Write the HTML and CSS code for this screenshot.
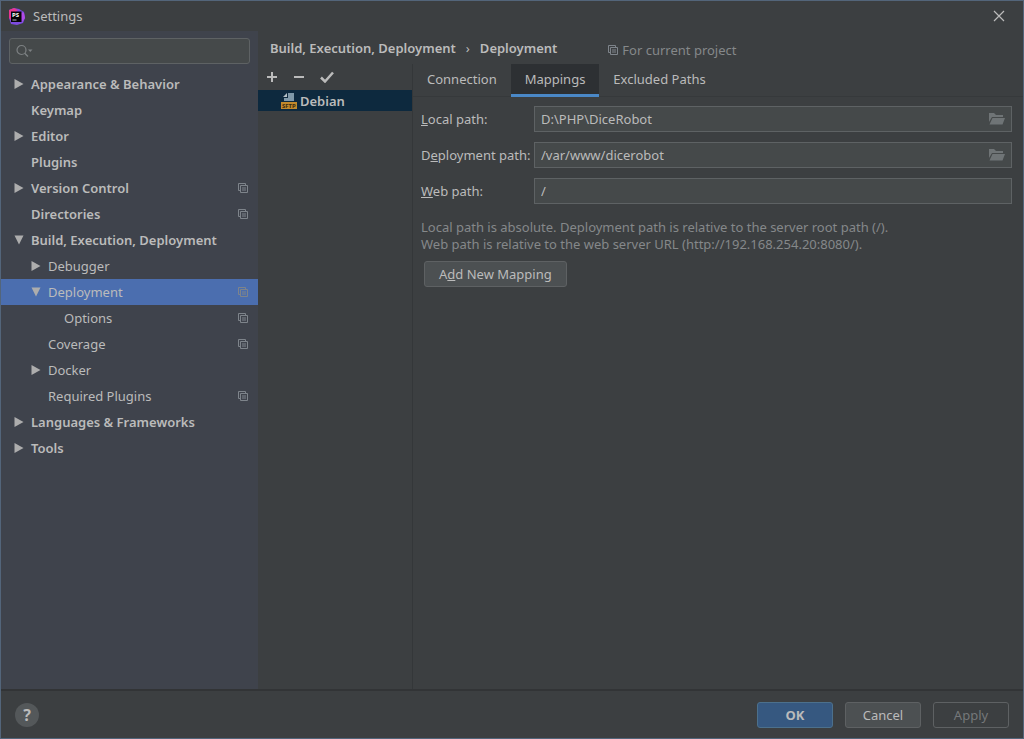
FILE: index.html
```
<!DOCTYPE html>
<html lang="en">
  <head>
    <meta charset="UTF-8" />
    <meta name="viewport" content="width=device-width, initial-scale=1.0" />
    <title>Settings</title>
    <link rel="stylesheet" href="styles.css">
  </head>
  <body>
    <!-- shared icons -->
    <svg class="sprite" aria-hidden="true">
      <symbol id="right" viewBox="0 0 10 12"><path d="M0.5 1v10l9-5z" fill="currentColor" /></symbol>
      <symbol id="down" viewBox="0 0 10 12"><path d="M0.5 1.5h9l-4.500 9z" fill="currentColor" /></symbol>
      <symbol id="copy" viewBox="0 0 10 10">
        <path d="M2 7.500H0.500v-7h7V2M2.500 2.500h7v7h-7zM4 5h4M4 7h4" fill="none" stroke="currentColor" />
      </symbol>
      <symbol id="folder" viewBox="0 0 16 12">
        <path d="M0 9V0h5l2 2h7v2H3zM3.500 5H16l-2.500 6.500H0.500z" fill="currentColor" />
      </symbol>
    </svg>

    <header class="titlebar">
      <svg class="logo" viewBox="0 0 17 17">
        <path d="M1 2l5-2 5 1 5 3 1 6-2 5-6 2-6-1-2-6z" fill="#7d4be0" />
        <path d="M1 2l5-2 4 2-5 4-2 6-2-2z" fill="#e8368f" />
        <path d="M12 4l4 1 1 5-3 4z" fill="#b04ae8" />
        <rect x="3" y="3.500" width="10.500" height="10.500" fill="#050308" />
        <text x="4" y="9" class="logo-text">PS</text>
        <path d="M4.500 12h4" stroke="#bbb" />
      </svg>
      <h1>Settings</h1>
      <button class="close" aria-label="Close">
        <svg width="12" height="12" viewBox="0 0 12 12"><path d="M1 1l10 10M11 1L1 11" stroke="currentColor" stroke-width="1.200" /></svg>
      </button>
    </header>

    <div class="content">
      <aside class="sidebar">
        <div class="search">
          <svg width="18" height="14" viewBox="0 0 18 14">
            <circle cx="5.500" cy="6" r="4.500" fill="none" stroke="currentColor" stroke-width="1.200" />
            <path d="M8.700 9.200l3.300 3.300" stroke="currentColor" stroke-width="1.300" />
            <path d="M12 5.500h4.500l-2.250 2.500z" fill="currentColor" />
          </svg>
          <input type="text" aria-label="Search settings" />
        </div>
        <nav>
          <ul class="tree">
            <li><a href="#"><svg class="arrow"><use href="#right" /></svg>Appearance &amp; Behavior</a></li>
            <li><a href="#"><span class="arrow"></span>Keymap</a></li>
            <li><a href="#"><svg class="arrow"><use href="#right" /></svg>Editor</a></li>
            <li><a href="#"><span class="arrow"></span>Plugins</a></li>
            <li><a href="#"><svg class="arrow"><use href="#right" /></svg>Version Control<svg class="copy"><use href="#copy" /></svg></a></li>
            <li><a href="#"><span class="arrow"></span>Directories<svg class="copy"><use href="#copy" /></svg></a></li>
            <li>
              <a href="#"><svg class="arrow"><use href="#down" /></svg>Build, Execution, Deployment</a>
              <ul class="level-2">
                <li><a href="#"><svg class="arrow"><use href="#right" /></svg>Debugger</a></li>
                <li>
                  <a href="#" class="selected"><svg class="arrow"><use href="#down" /></svg>Deployment<svg class="copy"><use href="#copy" /></svg></a>
                  <ul class="level-3">
                    <li><a href="#"><span class="arrow"></span>Options<svg class="copy"><use href="#copy" /></svg></a></li>
                  </ul>
                </li>
                <li><a href="#"><span class="arrow"></span>Coverage<svg class="copy"><use href="#copy" /></svg></a></li>
                <li><a href="#"><svg class="arrow"><use href="#right" /></svg>Docker</a></li>
                <li><a href="#"><span class="arrow"></span>Required Plugins<svg class="copy"><use href="#copy" /></svg></a></li>
              </ul>
            </li>
            <li><a href="#"><svg class="arrow"><use href="#right" /></svg>Languages &amp; Frameworks</a></li>
            <li><a href="#"><svg class="arrow"><use href="#right" /></svg>Tools</a></li>
          </ul>
        </nav>
      </aside>

      <main>
        <div class="breadcrumb">
          <h2>Build, Execution, Deployment</h2>
          <span class="sep">›</span>
          <h2>Deployment</h2>
          <p class="scope"><svg class="copy"><use href="#copy" /></svg>For current project</p>
        </div>

        <div class="panes">
          <section class="servers">
            <div class="toolbar">
              <button aria-label="Add"><svg width="12" height="12" viewBox="0 0 12 12"><path d="M6 1v10M1 6h10" stroke="currentColor" stroke-width="2" /></svg></button>
              <button aria-label="Remove"><svg width="12" height="12" viewBox="0 0 12 12"><path d="M1 6h10" stroke="currentColor" stroke-width="2" /></svg></button>
              <button aria-label="Use as default"><svg width="14" height="12" viewBox="0 0 14 12"><path d="M1 6.500l4 4L13 1.500" fill="none" stroke="currentColor" stroke-width="2.500" /></svg></button>
            </div>
            <ul>
              <li>
                <a href="#" class="server">
                  <svg width="16" height="16" viewBox="0 0 16 16">
                    <path d="M7 0h6v8H3V5h4z" fill="#7f98a8" />
                    <path d="M6 0v4H2z" fill="#b5c0c6" />
                    <rect y="9" width="16" height="7" fill="#c28a2c" />
                    <text x="1" y="15" class="sftp">SFTP</text>
                  </svg>
                  Debian
                </a>
              </li>
            </ul>
          </section>

          <section class="details">
            <div class="tabs" role="tablist">
              <button role="tab">Connection</button>
              <button role="tab" class="active" aria-selected="true">Mappings</button>
              <button role="tab">Excluded Paths</button>
            </div>
            <form>
              <div class="fields">
                <label for="local"><u>L</u>ocal path:</label>
                <div class="field">
                  <input type="text" id="local" value="D:\PHP\DiceRobot" />
                  <button type="button" aria-label="Browse local path"><svg width="16" height="12"><use href="#folder" /></svg></button>
                </div>
                <label for="deploy">D<u>e</u>ployment path:</label>
                <div class="field">
                  <input type="text" id="deploy" value="/var/www/dicerobot" />
                  <button type="button" aria-label="Browse deployment path"><svg width="16" height="12"><use href="#folder" /></svg></button>
                </div>
                <label for="web"><u>W</u>eb path:</label>
                <div class="field">
                  <input type="text" id="web" value="/" />
                </div>
              </div>
              <p class="hint">Local path is absolute. Deployment path is relative to the server root path (/).<br />Web path is relative to the web server URL (http://192.168.254.20:8080/).</p>
              <button type="button" class="btn add">A<u>d</u>d New Mapping</button>
            </form>
          </section>
        </div>
      </main>
    </div>

    <footer>
      <button class="help" aria-label="Help">?</button>
      <button class="btn primary">OK</button>
      <button class="btn">Cancel</button>
      <button class="btn" disabled>Apply</button>
    </footer>
  </body>
</html>
```
FILE: styles.css
```
* {
  box-sizing: border-box;
}

body {
  margin: 0;
  min-height: 100vh;
  display: flex;
  flex-direction: column;
  border: 1px solid #53657a;
  background-color: #3c3f41;
  color: #bbb;
  font-family: "Noto Sans", "Open Sans", sans-serif;
  font-size: 13px;
  line-height: 18px;
}

h1,
h2,
p,
ul {
  margin: 0;
  padding: 0;
  font-size: 13px;
}

h2 {
  font-weight: 600;
}

ul {
  list-style: none;
}

a {
  color: inherit;
  text-decoration: none;
}

button {
  padding: 0;
  border: none;
  background: none;
  color: inherit;
  font: inherit;
  cursor: pointer;
}

svg {
  display: block;
  flex: none;
}

.sprite {
  position: absolute;
  width: 0;
  height: 0;
}

.titlebar {
  display: flex;
  align-items: center;
  gap: 8px;
  height: 30px;
  padding: 0 18px 0 7px;
}

.titlebar h1 {
  flex: 1;
  font-weight: normal;
}

.logo {
  width: 17px;
  height: 17px;
}

.logo-text {
  fill: #fff;
  font-size: 6px;
  font-weight: bold;
}

.content {
  flex: 1;
  display: flex;
}

.sidebar {
  width: 257px;
  flex: none;
  background-color: #3f434c;
}

.search {
  display: flex;
  align-items: center;
  height: 26px;
  margin: 7px 8px;
  padding-left: 6px;
  border: 1px solid #5e6264;
  border-radius: 3px;
  background-color: #45494a;
  color: #7d8183;
}

.search input {
  flex: 1;
  min-width: 0;
  border: none;
  outline: none;
  background: none;
  color: #bbb;
  font: inherit;
}

.tree a {
  display: flex;
  align-items: center;
  height: 26px;
  padding: 0 10px 0 13px;
  font-weight: 600;
}

.arrow {
  width: 10px;
  height: 12px;
  margin-right: 7px;
  color: #adadad;
}

.copy {
  width: 10px;
  height: 10px;
  color: #7e848b;
}

.tree .copy {
  margin-left: auto;
}

.tree .level-2 a {
  padding-left: 30px;
  font-weight: normal;
}

.tree .level-3 a {
  padding-left: 46px;
}

.tree a.selected {
  background-color: #4b6eaf;
}

main {
  flex: 1;
  min-width: 0;
  display: flex;
  flex-direction: column;
}

.breadcrumb {
  display: flex;
  align-items: center;
  height: 33px;
  padding-left: 12px;
}

.sep {
  margin: 0 10px;
}

.scope {
  display: flex;
  align-items: center;
  gap: 4px;
  margin-left: 51px;
  padding-top: 4px;
  color: #85888a;
}

.panes {
  flex: 1;
  display: flex;
}

.servers {
  width: 155px;
  flex: none;
  border-right: 1px solid #343739;
}

.toolbar {
  display: flex;
  align-items: center;
  gap: 15px;
  height: 26px;
  padding-left: 8px;
}

.server {
  display: flex;
  align-items: center;
  gap: 3px;
  height: 21px;
  padding-left: 23px;
  background-color: #0d293e;
  font-weight: 600;
  line-height: 20px;
}

.sftp {
  fill: #3b2c10;
  font-size: 6px;
  font-weight: bold;
}

.details {
  flex: 1;
  min-width: 0;
}

.tabs {
  display: flex;
  height: 33px;
  border-bottom: 1px solid #36393b;
}

.tabs button {
  height: 33px;
  padding: 0 14px;
  border-bottom: 3px solid transparent;
}

.tabs .active {
  border-color: #4a88c7;
  background-color: #2d3033;
}

form {
  padding: 9px 11px 0 8px;
}

.fields {
  display: grid;
  grid-template-columns: 113px 1fr;
  row-gap: 10px;
  align-items: center;
}

.fields label {
  white-space: nowrap;
}

.field {
  display: flex;
  align-items: center;
  height: 26px;
  padding: 0 6px;
  border: 1px solid #5e6264;
  background-color: #45494a;
}

.field input {
  flex: 1;
  min-width: 0;
  padding: 0;
  border: none;
  outline: none;
  background: none;
  color: inherit;
  font: inherit;
}

.field button {
  color: #6f7476;
}

.hint {
  margin: 15px 0 8px;
  color: #85888a;
  line-height: 17px;
}

.btn {
  min-width: 76px;
  height: 26px;
  padding: 0 14px;
  border: 1px solid #5e6163;
  border-radius: 3px;
  background-color: #4c5052;
}

.add {
  margin-left: 3px;
}

.primary {
  border-color: #4c708c;
  background-color: #365880;
  font-weight: bold;
}

.btn:disabled {
  background: none;
  color: #75787a;
  cursor: default;
}

footer {
  display: flex;
  align-items: center;
  gap: 12px;
  height: 49px;
  padding: 0 14px;
  border-top: 2px solid #323436;
}

.help {
  width: 24px;
  height: 24px;
  margin-right: auto;
  border-radius: 50%;
  background-color: #54585a;
  font-size: 16px;
  font-weight: bold;
}
```
